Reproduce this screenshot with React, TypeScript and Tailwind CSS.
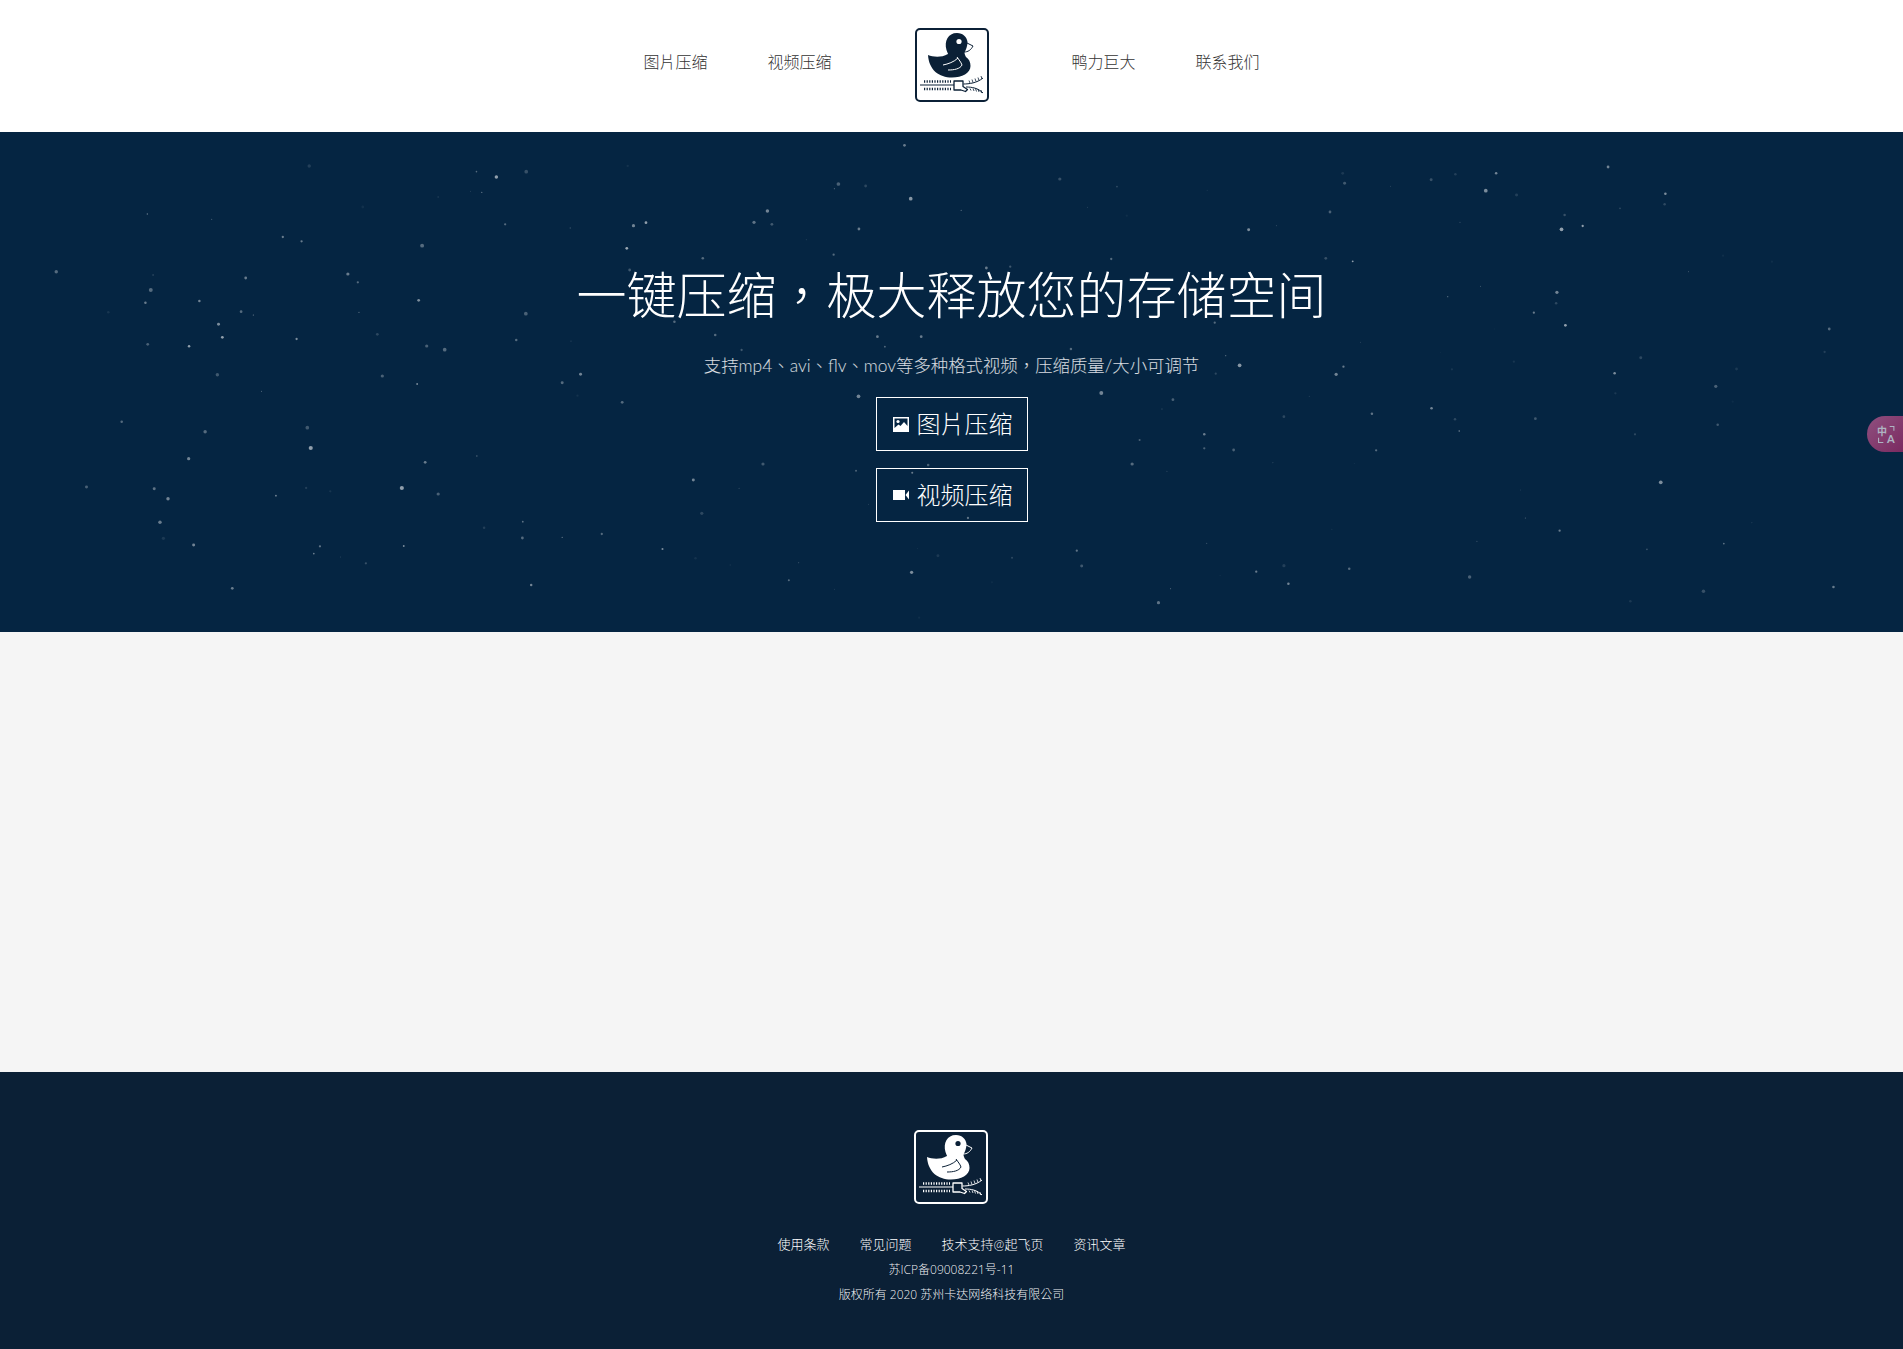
import React from 'react';

type Star = [number, number, number, number];

// star positions read off the crops: [x, y, radius, opacity]
const leftStars: Star[] = [
  [808,108,1.5,.15],[1245,125,.7,.4],[1297,141,1.5,.7],[1375,125,1.6,.25],[385,252,.6,.5],[553,268,.6,.3],[1229,184,.4,.3],[1259,187,.5,.6],
  [1145,201,.8,.1],[948,231,1.2,.07],[1320,283,1,.4],[1490,294,.6,.25],[739,321,1,.5],[788,334,1,.5],[1103,347,1.7,.4],[147,425,1.5,.4],
  [400,435,.6,.3],[642,444,1.2,.5],[909,432,1.4,.5],[935,457,1,.4],[394,480,1.7,.4],[380,518,1.1,.5],[521,513,1.1,.55],[1094,511,1.2,.6],
  [1374,551,1.6,.35],[630,545,1.2,.4],[662,555,.5,.6],[938,547,.5,.5],[283,547,1.1,.1],[571,583,1.3,.6],[581,622,1.2,.7],[775,627,1,.6],
  [386,643,1.2,.35],[494,649,1.1,.7],[986,613,1.2,.2],[1115,648,1.4,.35],[1162,659,1.6,.4],[1349,630,1.1,.4],[1492,634,.9,.08],[568,734,1.5,.3],
  [999,738,1.4,.35],[1090,762,.8,.6],[1469,758,1.3,.4],[1517,733,1.3,.55],[683,784,.4,.7],[1509,797,1,.08],[318,875,1.1,.4],[536,905,1.5,.4],
  [803,893,1.6,.3],[812,954,1.8,.7],[493,986,1.4,.55],[1111,997,1.2,.5],[1246,978,.6,.4],[226,1071,1.3,.35],[403,1076,1.3,.45],[439,1106,1.5,.55],
  [721,1097,.8,.55],[800,1074,1,.15],[863,1084,1,.1],[1050,1074,1.8,.7],[1145,1092,1.4,.35],[418,1177,1.5,.5],[427,1225,1.4,.12],[506,1245,1.3,.55],
  [836,1249,1,.45],[820,1271,.7,.55],[890,1281,.4,.3],[956,1300,1,.25],[1055,1248,.8,.6],[1265,1193,1.1,.15],[1366,1175,.8,.45],[1365,1224,1.2,.4],
  [1469,1222,.6,.5],[1388,1365,1.1,.55],[607,1375,1.2,.5],
];

const topStars: Star[] = [
  [682,46,1.2,.5],[62,108,1,.08],[534,162,1.6,.35],[595,168,1.2,.2],[525,176,.5,.4],[696,206,1.6,.65],[1030,147,1.4,.25],[1158,170,.7,.25],
  [1360,181,.4,.2],[1092,232,.4,.3],[809,241,.5,.5],[1180,257,1,.06],[375,243,1.5,.55],[75,287,1.4,.55],[103,278,1.2,.7],[345,277,1.4,.45],
  [385,283,1.2,.3],[580,297,1.2,.5],[1453,299,1.3,.6],[1515,287,.4,.4],[60,355,1.2,.75],[462,329,.4,.3],
];

const centerStars: Star[] = [
  [287,25,1.1,.4],[550,14,1,.4],[1108,27,1,.4],[140,60,1.2,.3],[857,54,1.2,.5],[905,50,1,.3],[230,215,1.1,.4],[1316,218,1,.4],[312,255,1.1,.4],
  [638,260,1.2,.5],[726,260,1.2,.5],[653,290,.8,.4],[365,300,1,.3],[1027,297,1.1,.4],[1366,346,1.6,.65],[1338,317,.6,.4],[1318,371,1,.2],
  [600,439,1.6,.55],[1088,429,1.7,.55],[1232,449,1.2,.35],[125,457,1.2,.4],[1455,500,1.2,.2],[1210,477,.4,.5],[1295,553,1.1,.5],[1165,570,.9,.35],
  [1295,595,1,.35],[1354,600,1.2,.35],[1150,642,1.4,.4],[408,642,1.4,.3],[268,690,1.3,.55],[740,645,1.1,.35],[595,662,.9,.35],[708,668,.9,.5],
  [1220,664,.4,.4],[1433,638,.4,.4],[285,790,1.4,.2],[620,763,.4,.3],[820,804,1,.45],[84,852,1,.4],[360,715,.6,.2],
];

const bottomStars: Star[] = [
  [140,117,.9,.6],[711,116,.3,.2],[757,137,1.3,.12],[923,143,.9,.2],[1068,122,1,.45],[1079,168,1.3,.3],[1359,100,.5,.3],[214,145,1.1,.08],
  [292,165,.8,.06],[445,158,.5,.25],[698,187,1.4,.6],[1470,185,1,.5],[1532,167,1.4,.15],[1542,221,1.1,.55],[1389,196,.4,.15],[423,211,.9,.4],
  [525,238,.4,.25],[878,217,1,.05],[1278,236,.5,.35],[1251,278,1.4,.45],[715,323,1,.06],
];

const rightStars: Star[] = [
  [111,130,1.2,.12],[116,160,1.3,.3],[235,169,.4,.3],[341,149,1.3,.25],[404,133,1.1,.15],[510,130,1.1,.55],[483,182,1.6,.6],[563,195,1.3,.15],
  [801,111,1.2,.55],[950,191,1.1,.6],[948,223,1.1,.2],[832,235,.8,.2],[78,246,1.2,.35],[416,277,.4,.5],[688,255,1.1,.25],[680,298,1.6,.7],
  [735,288,1,.7],[67,385,1.2,.25],[137,394,.8,.7],[1010,425,.4,.5],[1100,377,1,.06],[1227,395,1,.06],[469,469,.4,.5],[384,500,.6,.4],
  [668,487,1.4,.55],[666,520,1.1,.2],[608,548,1,.5],[690,586,1.2,.7],[505,597,.4,.1],[157,637,.4,.3],[365,668,.4,.1],[556,695,1,.1],
  [395,718,1,.1],[886,683,1.3,.2],[1135,717,1.2,.12],[113,710,1,.5],[94,733,1.4,.55],[818,730,1.1,.6],[1081,769,1.4,.35],[820,790,1,.12],
  [24,799,.4,.3],[187,851,1.1,.45],[342,835,1.1,.55],[403,868,1.1,.2],[612,866,1.2,.3],[414,903,.7,.55],[1086,884,1.1,.3],[871,913,1,.2],
  [198,961,1,.4],[1125,815,1,.05],[1376,597,1.2,.4],[1364,666,1,.15],[141,1000,.4,.15],[938,1057,1.6,.6],[573,1080,.4,.25],[586,1164,.5,.4],
  [675,1202,1,.5],[1175,1178,.4,.3],[460,1234,.5,.3],[902,1258,.8,.25],[1102,1241,.7,.5],[83,1198,.4,.2],[128,1316,1.1,.4],[441,1341,1.5,.35],
  [1049,1384,1.5,.25],[859,1414,1.1,.12],[1387,1371,1.1,.5],
];

// crop coords -> hero coords (hero starts at y=132)
const place = (stars: Star[], sx: number, ox: number, oy: number): Star[] =>
  stars.map(([x, y, r, o]) => [ox + x / sx, oy + y / 3 - 132, r * 1.15, o * 0.8]);

const stars = [
  ...place(leftStars, 2.613, 0, 130),
  ...place(topStars, 2.24, 600, 130),
  ...place(centerStars, 2.01, 560, 250),
  ...place(bottomStars, 2.24, 600, 510),
  ...place(rightStars, 2.6, 1300, 130),
];

const Logo = ({ fg, bg }: { fg: string; bg: string }) => (
  <svg viewBox="0 0 74 74" className="block h-[74px] w-[74px]">
    <rect x="1" y="1" width="72" height="72" rx="4" fill={bg} stroke={fg} strokeWidth="2" />
    <path
      d="M13 27C18 29 26 30 33 26C33 25 32 24 31.5 22C29 13 33 5 42 5C48 5 52 9 52.5 14C52.5 18 51 22 49.5 24.5C49.5 26 50 27 51 29C54 31 55.5 34 55.5 38C55.5 45 47 49.5 37 49.5C24 49.5 14 42 13 27Z"
      fill={fg}
    />
    <path d="M51 14.5L58 18C56 22 53 24 49 24" fill="none" stroke={fg} strokeWidth="1" />
    <circle cx="44" cy="13.5" r="2.6" fill={bg} />
    <path d="M28 37C33 36 39 34 43 30M33 42C39 42 45 41 47 37C46 34 44 32 42 29" fill="none" stroke={bg} strokeWidth="1" />
    <path d="M5 57H39" stroke={fg} strokeWidth="1.2" />
    <path d="M9 53.5H36M9 61H36" stroke={fg} strokeWidth="2.6" strokeDasharray="1.2 1.4" />
    <path d="M39 53H48V58.5L52.5 61.5L50.5 63.5L46 62H39Z" fill={bg} stroke={fg} strokeWidth="1.3" strokeLinejoin="round" />
    <path d="M48.5 56C54 56 62 55 68 50M51 59C57 59 63 60 68 65" fill="none" stroke={fg} strokeWidth="1" />
    <path d="M54 52.5L55 55M57 51.5L58 54.5M60 50.5L61 53.5M63 49.5L64 52.5M66 48L67 51M55 60.5L56 62.5M58 60.5L59 63M60.5 60.5L61.5 63.5M63 61L64 64M66 62L66.5 65" stroke={fg} strokeWidth="0.8" />
  </svg>
);

const PictureIcon = () => (
  <svg viewBox="0 0 16 15" className="h-[15px] w-[16px]">
    <path d="M0 0H16V15H0Z" fill="#fff" />
    <path d="M1.5 1.5H14.5V9L11 5L7.5 9L5.5 7.5L1.5 11Z" fill="#052542" />
    <circle cx="5" cy="4.5" r="1.6" fill="#fff" />
  </svg>
);

const VideoIcon = () => (
  <svg viewBox="0 0 16 10" className="h-[10px] w-[16px]">
    <path d="M0 0H12V10H0ZM12.5 5L16 0.5V9.5Z" fill="#fff" />
  </svg>
);

const HeroButton = ({ icon, label }: { icon: React.ReactNode; label: string }) => (
  <a className="flex h-[54px] w-[152px] items-center gap-[8px] border border-white pl-[16px] text-[24px] leading-none font-light text-white">
    {icon}
    <span>{label}</span>
  </a>
);

const App: React.FC = () => {
  return (
    <div className="relative min-h-[1349px] bg-[#f5f5f5] font-[Lato,'Noto_Sans_CJK_TC',sans-serif]">
      {/* Header */}
      <header className="flex h-[132px] items-center justify-center bg-white pb-[2px]">
        <nav className="flex items-center text-[16px] font-light text-[#333]">
          <a className="mb-[7px] w-[64px]">图片压缩</a>
          <a className="mb-[7px] ml-[60px] w-[64px]">视频压缩</a>
          <div className="mx-[83px]">
            <Logo fg="#0b2036" bg="#ffffff" />
          </div>
          <a className="mb-[7px] w-[64px]">鸭力巨大</a>
          <a className="mb-[7px] ml-[60px] w-[64px]">联系我们</a>
        </nav>
      </header>

      {/* Hero */}
      <section className="relative h-[500px] overflow-hidden bg-[#052542]">
        <svg className="absolute inset-0 h-full w-full">
          {stars.map(([x, y, r, o], i) => (
            <circle key={i} cx={x} cy={y} r={r} fill="#fff" opacity={o} />
          ))}
        </svg>
        <div className="relative flex flex-col items-center pt-[128px]">
          <h1 className="text-[50px] leading-[70px] font-light text-white">一键压缩，极大释放您的存储空间</h1>
          <p className="mt-[23px] text-[17.4px] leading-[26px] font-light text-white/85">
            支持mp4、avi、flv、mov等多种格式视频，压缩质量/大小可调节
          </p>
          <div className="mt-[18px] flex flex-col gap-[17px]">
            <HeroButton icon={<PictureIcon />} label="图片压缩" />
            <HeroButton icon={<VideoIcon />} label="视频压缩" />
          </div>
        </div>
      </section>

      <main className="h-[440px] bg-[#f5f5f5]" />

      {/* Footer */}
      <footer className="flex h-[277px] flex-col items-center bg-[#0b2036] pt-[58px]">
        <div className="mr-[1px]">
          <Logo fg="#ffffff" bg="#0b2036" />
        </div>
        <div className="mt-[30px] flex gap-[30px] text-[13px] leading-[20px] font-light text-white">
          <a>使用条款</a>
          <a>常见问题</a>
          <a>技术支持@起飞页</a>
          <a>资讯文章</a>
        </div>
        <p className="mt-[6px] font-['Open_Sans','Noto_Sans_CJK_TC',sans-serif] text-[12px] leading-[20px] font-light text-white/95">苏ICP备09008221号-11</p>
        <p className="mt-[5px] font-['Open_Sans','Noto_Sans_CJK_TC',sans-serif] text-[12px] leading-[20px] font-light text-white/95">版权所有 2020 苏州卡达网络科技有限公司</p>
      </footer>

      {/* Translate widget */}
      <div className="absolute top-[416px] right-0 flex h-[36px] w-[36px] items-center justify-center rounded-l-[18px] bg-gradient-to-br from-[#8f4f7f] to-[#7a2a60] pl-[3px]">
        <svg viewBox="0 0 18 18" className="h-[19px] w-[19px] text-[#aeb4c2]" fill="none" stroke="currentColor" strokeWidth="1">
          <text x="0" y="9.5" fontSize="9.5" fontWeight="700" fill="currentColor" stroke="none">中</text>
          <text x="9.5" y="17.5" fontSize="10.5" fontWeight="700" fill="currentColor" stroke="none">A</text>
          <path d="M12 1.5H16V5.5M1.5 12V16.5H6" />
        </svg>
      </div>
    </div>
  );
};

export default App;
